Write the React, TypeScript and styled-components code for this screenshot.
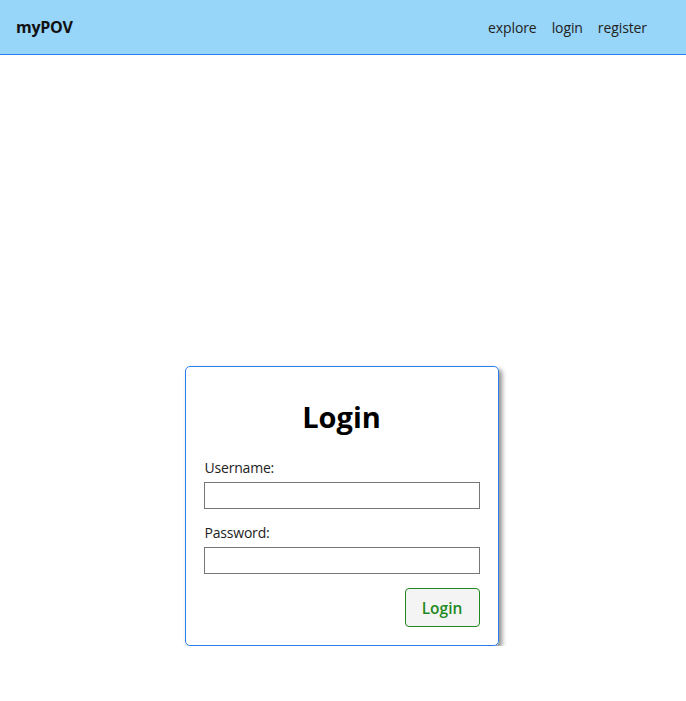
import React from "react";
import styled, { createGlobalStyle } from "styled-components";

const Global = createGlobalStyle`
  html, body { margin: 0; padding: 0; background: #fff; }
  body { font-family: "Open Sans", "Noto Sans", sans-serif; }
  * { box-sizing: border-box; }
`;

const Header = styled.header`
  height: 55px;
  background: #97d5f9;
  border-bottom: 1px solid #2a7ff0;
  display: flex;
  align-items: center;
  justify-content: space-between;
  padding: 0 39px 0 16px;
`;

const Logo = styled.div`
  font-weight: 700;
  font-size: 16px;
  color: #111;
  letter-spacing: -0.3px;
`;

const Nav = styled.nav`
  display: flex;
  gap: 15px;
`;

const NavLink = styled.a`
  font-size: 14px;
  color: #222;
  text-decoration: none;
  letter-spacing: -0.1px;
`;

const Main = styled.main`
  display: flex;
  justify-content: center;
  padding: 311px 0 0 0;
`;

const Card = styled.form`
  width: 314px;
  height: 280px;
  margin-left: -3px;
  border: 1px solid #2a7ff0;
  border-radius: 5px;
  box-shadow: 3px 3px 5px rgba(0, 0, 0, 0.45);
  padding: 30px 18px 0 18px;
  display: flex;
  flex-direction: column;
`;

const Title = styled.h1`
  margin: 0 0 21px 0;
  text-align: center;
  font-size: 29px;
  font-weight: 700;
  color: #000;
  line-height: 40px;
`;

const Label = styled.label`
  font-size: 14px;
  color: #222;
  padding-left: 1px;
  line-height: 20px;
  margin-bottom: 4px;
  letter-spacing: -0.2px;
`;

const Input = styled.input<{ $mb: number }>`
  width: 276px;
  height: 27px;
  border: 1px solid #767676;
  margin: 0 0 ${(p) => p.$mb}px 0;
  font-size: 14px;
  padding: 0 4px;
`;

const Row = styled.div`
  display: flex;
  justify-content: flex-end;
`;

const Button = styled.button`
  width: 75px;
  height: 39px;
  border: 1px solid #1f8a1f;
  border-radius: 4px;
  background: #f4f4f4;
  color: #1f8a1f;
  font-family: "Open Sans", "Noto Sans", sans-serif;
  font-size: 15.5px;
  font-weight: 600;
  cursor: pointer;
`;

export default function App() {
  return (
    <>
      <Global />
      <Header>
        <Logo>myPOV</Logo>
        <Nav>
          <NavLink href="#">explore</NavLink>
          <NavLink href="#">login</NavLink>
          <NavLink href="#">register</NavLink>
        </Nav>
      </Header>
      <Main>
        <Card onSubmit={(e) => e.preventDefault()}>
          <Title>Login</Title>
          <Label>Username:</Label>
          <Input $mb={14} type="text" />
          <Label>Password:</Label>
          <Input $mb={14} type="password" />
          <Row>
            <Button type="submit">Login</Button>
          </Row>
        </Card>
      </Main>
    </>
  );
}
